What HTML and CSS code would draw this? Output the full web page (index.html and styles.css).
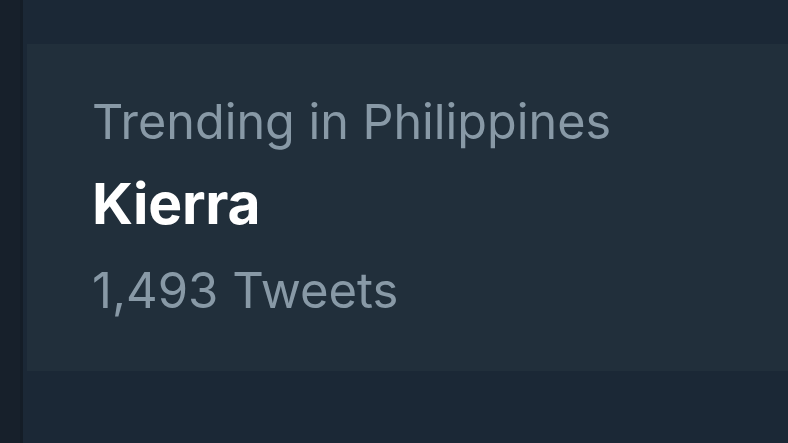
FILE: index.html
```html
<html>
<head>
   <link rel="stylesheet" href="styles.css">
</head>
<body>
   <div class="page">
      <div class="side-rail"></div>
      <div class="feed">
         <div class="trend-card">
            <div class="trend-meta">Trending in Philippines</div>
            <div class="trend-name">Kierra</div>
            <div class="trend-count">1,493 Tweets</div>
         </div>
      </div>
   </div>
</body>
</html>
```

FILE: styles.css
```css
html, body {
   margin: 0;
   height: 100%;
   background-color: #1b2836;
   font-family: Inter, Roboto, "Liberation Sans", sans-serif;
   overflow: hidden;
}
.page {
   display: flex;
   height: 100%;
}
.side-rail {
   width: 20px;
   background-color: #17202b;
   border-right: 3px solid #141d27;
}
.feed {
   flex: 1;
   padding-top: 44px;
   padding-left: 4px;
}
.trend-card {
   height: 327px;
   background-color: #212f3b;
   padding: 0 0 0 65px;
   box-sizing: border-box;
}
.trend-meta {
   color: #8899a6;
   font-size: 48.5px;
   line-height: 84px;
   padding-top: 36px;
}
.trend-name {
   color: #ffffff;
   font-size: 57px;
   font-weight: 700;
   line-height: 80px;
   letter-spacing: -0.3px;
}
.trend-count {
   color: #8899a6;
   font-size: 49px;
   line-height: 93px;
}
```
